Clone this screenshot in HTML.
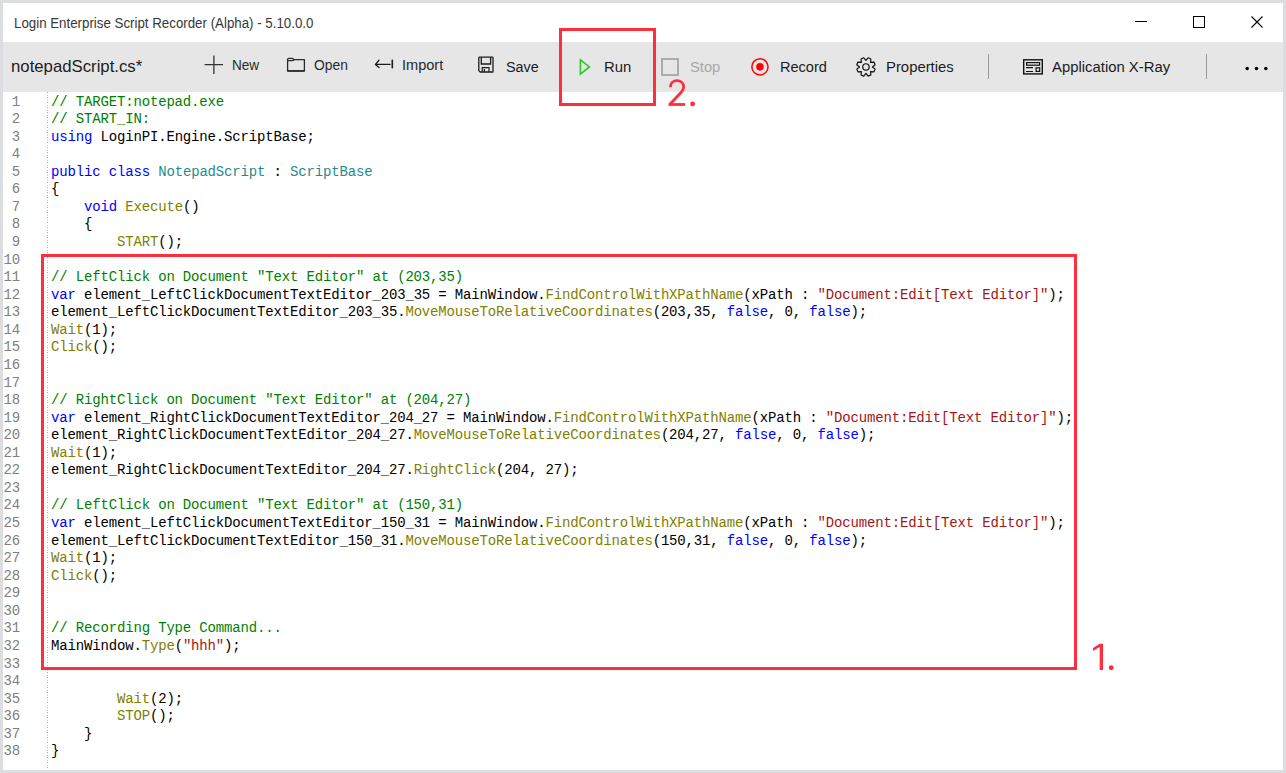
<!DOCTYPE html>
<html><head><meta charset="utf-8">
<style>
*{margin:0;padding:0;box-sizing:border-box}
html,body{width:1286px;height:773px;overflow:hidden;background:#dcdde1}
body{position:relative;font-family:"Liberation Sans",sans-serif}
.abs{position:absolute}
#win{position:absolute;left:3px;top:3px;width:1280px;height:767px;background:#fff}
#tb{position:absolute;left:3px;top:42px;width:1280px;height:50px;background:#e6e6e6}
.lbl{position:absolute;white-space:nowrap;color:#1c1c1c;line-height:20px;transform-origin:0 0}
#nums{position:absolute;left:0;top:93.5px;width:20px;text-align:right;font-family:"Liberation Mono",monospace;font-size:14px;color:#808080;line-height:17.56px;letter-spacing:-0.16px}
#sep{position:absolute;left:47px;top:92px;width:1px;height:678px;background:repeating-linear-gradient(to bottom,#adadad 0,#adadad 1px,transparent 1px,transparent 3px,#c6c6c6 3px,#c6c6c6 4px,transparent 4px,transparent 5px)}
#code{position:absolute;left:51px;top:93.5px;font-family:"Liberation Mono",monospace;font-size:14px;letter-spacing:-0.16px;line-height:17.56px;color:#000;white-space:pre}
#code i{font-style:normal}
.c{color:#008000}.k{color:#0000ff}.t{color:#1f8c8c}.m{color:#808000}.s{color:#a31515}
.rbox{position:absolute;border:3px solid #fd2e3d}
#ov{position:absolute;left:0;top:0}
</style></head><body>
<div id="win"></div>
<div id="tb"></div>
<div class="lbl" style="left:14px;top:13px;font-size:14px;color:#383838;transform:scaleX(0.95)">Login Enterprise Script Recorder (Alpha) - 5.10.0.0</div>
<div class="lbl" style="left:11px;top:57px;font-size:17px;transform:scaleX(0.985)">notepadScript.cs*</div>
<div class="lbl" style="left:232px;top:55px;font-size:14px;color:#2a2a2a;transform:scaleX(0.97)">New</div>
<div class="lbl" style="left:314px;top:55px;font-size:14px;color:#2a2a2a;transform:scaleX(0.99)">Open</div>
<div class="lbl" style="left:402px;top:55px;font-size:14px;color:#2a2a2a;transform:scaleX(1.04)">Import</div>
<div class="lbl" style="left:506px;top:57px;font-size:15.4px;transform:scaleX(0.935)">Save</div>
<div class="lbl" style="left:604px;top:57px;font-size:15.4px;transform:scaleX(0.966)">Run</div>
<div class="lbl" style="left:690px;top:57px;font-size:15.4px;color:#a6a6a6;transform:scaleX(0.956)">Stop</div>
<div class="lbl" style="left:780px;top:57px;font-size:15.4px;transform:scaleX(0.945)">Record</div>
<div class="lbl" style="left:886px;top:57px;font-size:15.4px;transform:scaleX(0.966)">Properties</div>
<div class="lbl" style="left:1052px;top:57px;font-size:15.4px;transform:scaleX(0.966)">Application X-Ray</div>
<div id="nums"><div>1</div><div>2</div><div>3</div><div>4</div><div>5</div><div>6</div><div>7</div><div>8</div><div>9</div><div>10</div><div>11</div><div>12</div><div>13</div><div>14</div><div>15</div><div>16</div><div>17</div><div>18</div><div>19</div><div>20</div><div>21</div><div>22</div><div>23</div><div>24</div><div>25</div><div>26</div><div>27</div><div>28</div><div>29</div><div>30</div><div>31</div><div>32</div><div>33</div><div>34</div><div>35</div><div>36</div><div>37</div><div>38</div></div>
<div id="sep"></div>
<div id="code"><div><i class="c">// TARGET:notepad.exe</i></div><div><i class="c">// START_IN:</i></div><div><i class="k">using</i> LoginPI.Engine.ScriptBase;</div><div>&#8203;</div><div><i class="k">public</i> <i class="k">class</i> <i class="t">NotepadScript</i> : <i class="t">ScriptBase</i></div><div>{</div><div>    <i class="k">void</i> <i class="m">Execute</i>()</div><div>    {</div><div>        <i class="m">START</i>();</div><div>&#8203;</div><div><i class="c">// LeftClick on Document "Text Editor" at (203,35)</i></div><div><i class="k">var</i> element_LeftClickDocumentTextEditor_203_35 = MainWindow.<i class="m">FindControlWithXPathName</i>(xPath : <i class="s">"Document:Edit[Text Editor]"</i>);</div><div>element_LeftClickDocumentTextEditor_203_35.<i class="m">MoveMouseToRelativeCoordinates</i>(203,35, <i class="k">false</i>, 0, <i class="k">false</i>);</div><div><i class="m">Wait</i>(1);</div><div><i class="m">Click</i>();</div><div>&#8203;</div><div>&#8203;</div><div><i class="c">// RightClick on Document "Text Editor" at (204,27)</i></div><div><i class="k">var</i> element_RightClickDocumentTextEditor_204_27 = MainWindow.<i class="m">FindControlWithXPathName</i>(xPath : <i class="s">"Document:Edit[Text Editor]"</i>);</div><div>element_RightClickDocumentTextEditor_204_27.<i class="m">MoveMouseToRelativeCoordinates</i>(204,27, <i class="k">false</i>, 0, <i class="k">false</i>);</div><div><i class="m">Wait</i>(1);</div><div>element_RightClickDocumentTextEditor_204_27.<i class="m">RightClick</i>(204, 27);</div><div>&#8203;</div><div><i class="c">// LeftClick on Document "Text Editor" at (150,31)</i></div><div><i class="k">var</i> element_LeftClickDocumentTextEditor_150_31 = MainWindow.<i class="m">FindControlWithXPathName</i>(xPath : <i class="s">"Document:Edit[Text Editor]"</i>);</div><div>element_LeftClickDocumentTextEditor_150_31.<i class="m">MoveMouseToRelativeCoordinates</i>(150,31, <i class="k">false</i>, 0, <i class="k">false</i>);</div><div><i class="m">Wait</i>(1);</div><div><i class="m">Click</i>();</div><div>&#8203;</div><div>&#8203;</div><div><i class="c">// Recording Type Command...</i></div><div>MainWindow.<i class="m">Type</i>(<i class="s">"hhh"</i>);</div><div>&#8203;</div><div>&#8203;</div><div>        <i class="m">Wait</i>(2);</div><div>        <i class="m">STOP</i>();</div><div>    }</div><div>}</div></div>
<div class="rbox" style="left:41px;top:254px;width:1036px;height:416px"></div>
<div class="rbox" style="left:559px;top:28px;width:97px;height:78px"></div>
<svg id="ov" width="1286" height="773" viewBox="0 0 1286 773">
  <!-- window controls -->
  <path d="M1135 21.5 H1147" stroke="#000" stroke-width="1" fill="none"/>
  <rect x="1193.5" y="16.5" width="11" height="11" fill="none" stroke="#000" stroke-width="1"/>
  <path d="M1251.5 16.5 L1262.5 27.5 M1262.5 16.5 L1251.5 27.5" stroke="#000" stroke-width="1.1" fill="none"/>
  <!-- New plus -->
  <path d="M213.9 55.4 V73.9 M204.6 64.7 H223" stroke="#333" stroke-width="1.3" fill="none"/>
  <!-- Open folder -->
  <path d="M287.6 71 V59.6 Q287.6 58.4 288.8 58.4 H292.6 L294.2 59.7 H304.4 V71 Z" stroke="#2a2a2a" stroke-width="1.3" fill="none" stroke-linejoin="round"/>
  <path d="M287.6 60.6 H292.6 L294.2 59.7" stroke="#2a2a2a" stroke-width="1.2" fill="none"/>
  <path d="M287.6 70.9 H304.4" stroke="#2a2a2a" stroke-width="1.4" fill="none"/>
  <!-- Import -->
  <path d="M375.6 64.4 H390 M379 60.3 L375.4 64.4 L379 67.6" stroke="#1a1a1a" stroke-width="1.3" fill="none" stroke-linecap="round" stroke-linejoin="round"/>
  <path d="M392.3 60.4 V67.7" stroke="#1a1a1a" stroke-width="1.6" fill="none" stroke-linecap="round"/>
  <!-- Save -->
  <path d="M478.8 57.9 Q478.8 57.2 479.5 57.2 H492.3 Q493 57.2 493 57.9 V72 H480.2 L478.8 70.6 Z" stroke="#1e1e1e" stroke-width="1.3" fill="none" stroke-linejoin="round"/>
  <path d="M481.3 57.2 V64 H490.6 V57.2" stroke="#1e1e1e" stroke-width="1.3" fill="none"/>
  <path d="M482.2 72 V67.6 H489 V72 M484.4 72 V69" stroke="#1e1e1e" stroke-width="1.2" fill="none"/>
  <!-- Run -->
  <path d="M580.4 59.8 L589.4 66.95 L580.4 74.1 Z" stroke="#28c828" stroke-width="1.6" fill="none" stroke-linejoin="miter"/>
  <!-- Stop -->
  <rect x="662" y="59" width="16" height="16" fill="none" stroke="#acacac" stroke-width="2"/>
  <!-- Record -->
  <circle cx="759.95" cy="66.85" r="8.1" fill="none" stroke="#f00" stroke-width="1.5"/>
  <circle cx="759.95" cy="66.85" r="3.8" fill="#f00"/>
  <!-- Properties gear -->
  <path d="M875.09 64.76 L873.96 62.04 L870.55 62.35 L870.86 58.94 L868.14 57.81 L865.95 60.45 L863.76 57.81 L861.04 58.94 L861.35 62.35 L857.94 62.04 L856.81 64.76 L859.45 66.95 L856.81 69.14 L857.94 71.86 L861.35 71.55 L861.04 74.96 L863.76 76.09 L865.95 73.45 L868.14 76.09 L870.86 74.96 L870.55 71.55 L873.96 71.86 L875.09 69.14 L872.45 66.95 Z" stroke="#111" stroke-width="1.2" fill="none" stroke-linejoin="round"/>
  <circle cx="865.95" cy="66.95" r="3.2" fill="none" stroke="#111" stroke-width="1.2"/>
  <!-- separators -->
  <rect x="988" y="54" width="1" height="25" fill="#9a9a9a"/>
  <rect x="1206" y="54" width="1" height="25" fill="#9a9a9a"/>
  <!-- X-Ray -->
  <rect x="1023.7" y="59.8" width="18.6" height="14.1" fill="none" stroke="#111" stroke-width="1.4"/>
  <rect x="1026.6" y="62.6" width="13" height="2.6" fill="none" stroke="#111" stroke-width="1.2"/>
  <path d="M1026 67.6 H1033 M1026 71.5 H1033" stroke="#111" stroke-width="1.2" fill="none"/>
  <rect x="1036.1" y="67.8" width="3.6" height="3.6" fill="none" stroke="#111" stroke-width="1.2"/>
  <!-- more dots -->
  <circle cx="1247.2" cy="68.5" r="1.75" fill="#000"/>
  <circle cx="1256.5" cy="68.5" r="1.75" fill="#000"/>
  <circle cx="1265.8" cy="68.5" r="1.75" fill="#000"/>
  <!-- annotations -->
  <g fill="#fd2e3d">
    <path d="M1093 648 L1099.7 643.8 L1103 643.8 L1103 669.9 L1099.7 669.9 L1099.7 646.9 L1093 651 Z"/>
    <circle cx="1111.2" cy="667.8" r="2.45"/>
    <circle cx="692.6" cy="103.9" r="2.45"/>
  </g>
  <path d="M670.4 87.2 C670.4 83.3 673.2 80.7 677 80.7 C680.9 80.7 683.7 83.3 683.7 86.8 C683.7 89 682.8 90.6 681.2 92.3 L670.2 104" stroke="#fd2e3d" stroke-width="2.8" fill="none"/>
  <rect x="668.5" y="103.1" width="16.6" height="2.8" fill="#fd2e3d"/>
</svg>
</body></html>
